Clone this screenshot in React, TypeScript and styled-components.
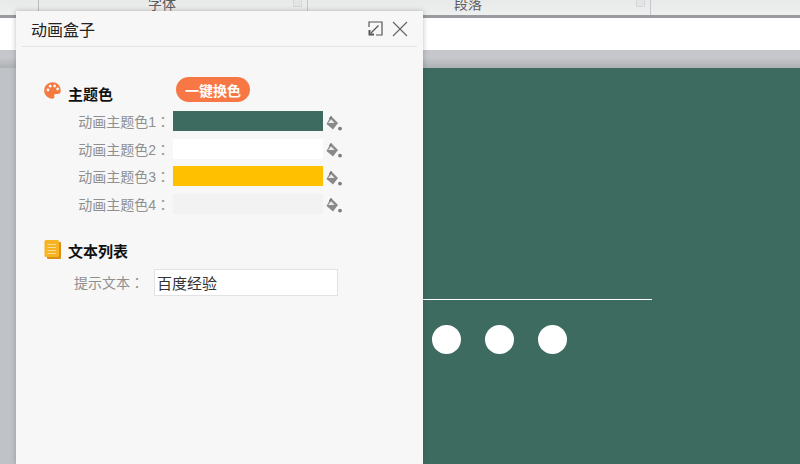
import styled, { createGlobalStyle } from 'styled-components';

const GlobalStyle = createGlobalStyle`
  html, body {
    margin: 0;
    padding: 0;
  }
  body {
    width: 800px;
    height: 464px;
    overflow: hidden;
    font-family: "Liberation Sans", "Noto Sans CJK SC", sans-serif;
  }
`;

const themeColors = [
  { label: '动画主题色1', color: '#3e6b60' },
  { label: '动画主题色2', color: '#ffffff' },
  { label: '动画主题色3', color: '#ffc000' },
  { label: '动画主题色4', color: '#f2f2f2' },
];

const PaletteIcon = () => (
  <svg width="17" height="17" viewBox="0 0 17 17">
    <path
      d="M8.5 0.3C3.9 0.3 0.2 3.9 0.2 8.5s3.7 8.2 8.3 8.2c1.5 0 2.2-1 1.8-2.1-.5-1.3.1-2.5 1.6-2.5h2c1.6 0 2.8-1.2 2.8-3C16.7 3.4 13 .3 8.5.3z"
      fill="#f47b3f"
    />
    <circle cx="4" cy="8" r="1.4" fill="#f7f7f7" />
    <circle cx="6.2" cy="4.2" r="1.4" fill="#f7f7f7" />
    <circle cx="10.6" cy="4" r="1.4" fill="#f7f7f7" />
    <circle cx="13.6" cy="7" r="1.4" fill="#f7f7f7" />
  </svg>
);

const ListIcon = () => (
  <svg width="17" height="19" viewBox="0 0 17 19">
    <path d="M3 2h13a1 1 0 0 1 1 1v15a1 1 0 0 1-1 1H4a1 1 0 0 1-1-1z" fill="#d98f12" />
    <rect x="0.5" y="0" width="14.5" height="17" rx="1.5" fill="#f6b425" />
    <path d="M3.5 4.5h8.5M3.5 7.5h8.5M3.5 10.5h8.5M3.5 13.5h8.5" stroke="#fbdc8f" strokeWidth="1" />
  </svg>
);

const BucketIcon = () => (
  <svg width="17" height="17" viewBox="0 0 17 17">
    <path d="M5 1l7 7-5 6.5L0.5 9z" fill="#8a8a8a" />
    <path d="M5 4.2L8.6 8H2.2z" fill="#ececec" />
    <path d="M3 3.4L5 1l1 1-2 2.4z" fill="#6f6f6f" />
    <circle cx="14" cy="13.6" r="1.9" fill="#7c7c7c" />
  </svg>
);

const RestoreIcon = () => (
  <svg width="15" height="15" viewBox="0 0 15 15" fill="none" stroke="#555555" strokeWidth="1.2">
    <path d="M1 6V1h13v13H8" />
    <path d="M10.5 4.5L3 12" />
    <path d="M1.5 9v4.5H6" strokeWidth="2" />
  </svg>
);

const CloseIcon = () => (
  <svg width="16" height="16" viewBox="0 0 16 16" fill="none" stroke="#666666" strokeWidth="1.2">
    <path d="M1 1l14 14M15 1L1 15" />
  </svg>
);

const App = () => {
  return (
    <Page>
      <GlobalStyle />
      <Ribbon>
        <RibbonEdge />
        <RibbonGroup $width={269}>
          <RibbonLabel>字体</RibbonLabel>
          <Launcher />
        </RibbonGroup>
        <RibbonGroup $width={343}>
          <RibbonLabel>段落</RibbonLabel>
          <Launcher />
        </RibbonGroup>
      </Ribbon>
      <WhiteBand />
      <ShadowBand />
      <Slide>
        <SlideLine />
        <Dots>
          <Dot />
          <Dot />
          <Dot />
        </Dots>
      </Slide>

      <Dialog>
        <TitleBar>
          <Title>动画盒子</Title>
          <TitleActions>
            <RestoreIcon />
            <CloseIcon />
          </TitleActions>
        </TitleBar>

        <ThemeHeader>
          <HeaderIcon>
            <PaletteIcon />
          </HeaderIcon>
          <SectionName>主题色</SectionName>
          <SwapButton>一键换色</SwapButton>
        </ThemeHeader>
        <ColorList>
          {themeColors.map((item) => (
            <ColorRow key={item.label}>
              <ColorLabel>
                {item.label}
                <Colon>：</Colon>
              </ColorLabel>
              <Swatch $color={item.color} />
              <BucketSlot>
                <BucketIcon />
              </BucketSlot>
            </ColorRow>
          ))}
        </ColorList>

        <ListHeader>
          <HeaderIcon>
            <ListIcon />
          </HeaderIcon>
          <SectionName>文本列表</SectionName>
        </ListHeader>
        <TextRow>
          <TextLabel>
            提示文本
            <Colon>：</Colon>
          </TextLabel>
          <TextInput defaultValue="百度经验" />
        </TextRow>
      </Dialog>
    </Page>
  );
};

export default App;

const Page = styled.div`
  position: relative;
  width: 800px;
  height: 464px;
  overflow: hidden;
  display: flex;
  flex-direction: column;
  background-color: #bfc3c8;
`;
const Ribbon = styled.div`
  height: 15px;
  flex-shrink: 0;
  display: flex;
  background: linear-gradient(#e8eaea, #eef0f0);
  border-bottom: 3px solid #9a9aa1;
`;
const RibbonEdge = styled.div`
  width: 38px;
  border-right: 1px solid #b9bcc0;
`;
const RibbonGroup = styled.div<{ $width: number }>`
  position: relative;
  width: ${(p) => p.$width}px;
  box-sizing: border-box;
  border-right: 1px solid #c4c7ca;
  text-align: center;
`;
const RibbonLabel = styled.span`
  display: block;
  margin-top: -5px;
  padding-right: 22px;
  font-size: 14px;
  line-height: 18px;
  color: #5b5b5b;
`;
const Launcher = styled.span`
  position: absolute;
  top: 0;
  right: 5px;
  width: 7px;
  height: 6px;
  border: 1px solid #d5d7d9;
  border-top: none;
  background-color: #e2e4e5;
`;
const WhiteBand = styled.div`
  height: 32px;
  flex-shrink: 0;
  background-color: #ffffff;
`;
const ShadowBand = styled.div`
  height: 18px;
  flex-shrink: 0;
  background: linear-gradient(#c4c6ca, #c6c8cc 40%, #aeb1b3);
`;
const Slide = styled.div`
  flex: 1;
  margin-left: 16px;
  display: flex;
  flex-direction: column;
  align-items: flex-end;
  padding: 231px 148px 0 0;
  background-color: #3e6b60;
`;
const SlideLine = styled.div`
  width: 300px;
  height: 1px;
  background-color: #ffffff;
`;
const Dots = styled.div`
  width: 300px;
  box-sizing: border-box;
  display: flex;
  gap: 24px;
  padding-left: 80px;
  margin-top: 25px;
`;
const Dot = styled.div`
  width: 29px;
  height: 29px;
  border-radius: 50%;
  background-color: #ffffff;
`;
const Dialog = styled.div`
  position: absolute;
  top: 11px;
  left: 16px;
  width: 407px;
  height: 453px;
  box-sizing: border-box;
  padding: 0 6px;
  background-color: #f7f7f7;
  box-shadow: 0 0 5px rgba(60, 60, 60, 0.35);
`;
const TitleBar = styled.div`
  height: 35px;
  display: flex;
  align-items: center;
  justify-content: space-between;
  padding: 0 9px 0 9px;
  border-bottom: 1px solid #e4e4e4;
`;
const Title = styled.span`
  font-size: 16px;
  color: #222222;
`;
const TitleActions = styled.div`
  display: flex;
  align-items: center;
  gap: 9px;
`;
const ThemeHeader = styled.div`
  position: relative;
  display: flex;
  align-items: center;
  height: 24px;
  margin: 34px 0 0 22px;
`;
const HeaderIcon = styled.span`
  width: 24px;
  height: 19px;
  margin-top: -3px;
  display: block;
`;
const SectionName = styled.span`
  font-size: 15px;
  font-weight: 700;
  color: #111111;
`;
const SwapButton = styled.button`
  position: absolute;
  top: -4px;
  left: 132px;
  width: 74px;
  height: 25px;
  padding: 0;
  border: none;
  border-radius: 13px;
  background-color: #f87845;
  color: #ffffff;
  font-family: inherit;
  font-size: 14px;
  font-weight: 700;
`;
const ColorList = styled.div`
  display: flex;
  flex-direction: column;
  gap: 7.5px;
  margin-top: 6px;
`;
const ColorRow = styled.div`
  display: flex;
  align-items: center;
  height: 20px;
`;
const ColorLabel = styled.span`
  width: 148px;
  margin-right: 3px;
  text-align: right;
  font-size: 14px;
  color: #8f8f8f;
  white-space: nowrap;
`;
const Colon = styled.span`
  font-family: "Noto Sans CJK TC", sans-serif;
`;
const Swatch = styled.div<{ $color: string }>`
  width: 150px;
  height: 20px;
  margin-right: 3px;
  background-color: ${(p) => p.$color};
`;
const BucketSlot = styled.span`
  display: block;
  height: 17px;
  margin-top: 4px;
`;
const ListHeader = styled.div`
  display: flex;
  align-items: center;
  height: 24px;
  margin: 25px 0 0 22px;
`;
const TextRow = styled.div`
  display: flex;
  align-items: center;
  margin: 6px 0 0 52px;
`;
const TextLabel = styled.span`
  width: 80px;
  font-size: 14px;
  color: #8f8f8f;
`;
const TextInput = styled.input`
  width: 184px;
  height: 27px;
  box-sizing: border-box;
  padding: 0 2px;
  border: 1px solid #e2e2e2;
  background-color: #ffffff;
  color: #333333;
  font-family: inherit;
  font-size: 15px;
  outline: none;
`;
